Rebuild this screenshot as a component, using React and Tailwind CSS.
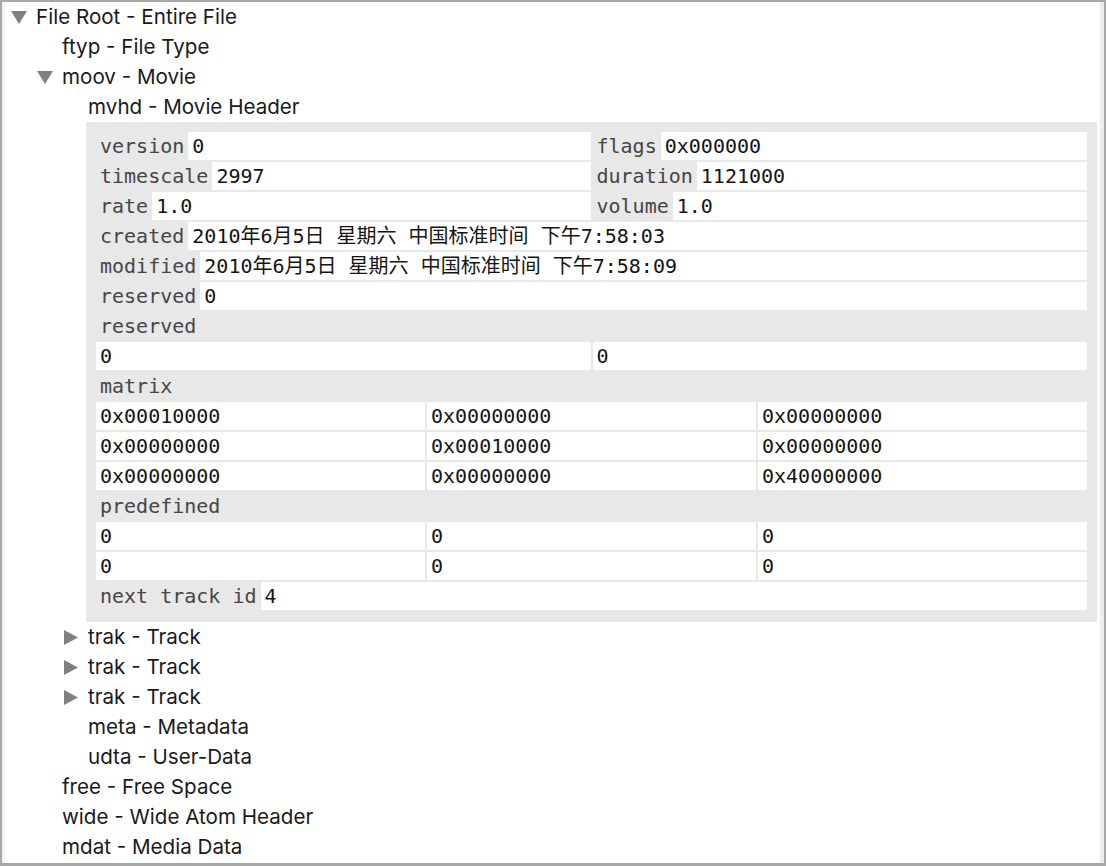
import React from "react";

const SANS = { fontFamily: "Inter, 'Liberation Sans', sans-serif" };
const MONO = {
  fontFamily: "'DejaVu Sans Mono', 'Noto Sans CJK SC', monospace",
};

function DownTri() {
  return (
    <svg width="16" height="13" viewBox="0 0 16 13" className="ml-[1px]">
      <polygon points="0,0 16,0 8,13" fill="#808080" />
    </svg>
  );
}

function RightTri() {
  return (
    <svg width="14" height="15" viewBox="0 0 14 15" className="ml-[2px]">
      <polygon points="0,0 14,7.5 0,15" fill="#808080" />
    </svg>
  );
}

function TreeRow({ level, label, toggle }) {
  return (
    <div
      className="flex h-[30px] items-center text-[20.6px] text-[#1a1a1a]"
      style={{ paddingLeft: 5 + level * 26 }}
    >
      <div className="flex w-[26px] items-center">
        {toggle === "open" && <DownTri />}
        {toggle === "closed" && <RightTri />}
      </div>
      <span className="whitespace-nowrap">{label}</span>
    </div>
  );
}

// Label sits on the panel grey, value gets a white cell filling the rest.
function Field({ name, value }) {
  return (
    <div className="flex h-[28px] items-center">
      <span className="whitespace-pre px-[4px] text-[#454545]">{name}</span>
      <span className="flex h-full flex-1 items-center whitespace-pre bg-white px-[4px] text-[#141414]">
        {value}
      </span>
    </div>
  );
}

function Header({ name }) {
  return (
    <div className="flex h-[28px] items-center px-[4px] text-[#454545]">{name}</div>
  );
}

function Cell({ value }) {
  return (
    <div className="flex h-[28px] items-center bg-white px-[4px] text-[#141414]">
      {value}
    </div>
  );
}

const matrix = [
  ["0x00010000", "0x00000000", "0x00000000"],
  ["0x00000000", "0x00010000", "0x00000000"],
  ["0x00000000", "0x00000000", "0x40000000"],
];

function MovieHeaderPanel() {
  return (
    <div
      className="ml-[81px] mr-[3px] flex flex-col gap-[2px] bg-[#e8e8e8] px-[10px] pb-[12px] pt-[10px] text-[20px] leading-[28px]"
      style={MONO}
    >
      <div className="grid grid-cols-2 gap-[2px]">
        <Field name="version" value="0" />
        <Field name="flags" value="0x000000" />
      </div>
      <div className="grid grid-cols-2 gap-[2px]">
        <Field name="timescale" value="2997" />
        <Field name="duration" value="1121000" />
      </div>
      <div className="grid grid-cols-2 gap-[2px]">
        <Field name="rate" value="1.0" />
        <Field name="volume" value="1.0" />
      </div>
      <Field name="created" value="2010年6月5日 星期六 中国标准时间 下午7:58:03" />
      <Field name="modified" value="2010年6月5日 星期六 中国标准时间 下午7:58:09" />
      <Field name="reserved" value="0" />
      <Header name="reserved" />
      <div className="grid grid-cols-2 gap-[2px]">
        <Cell value="0" />
        <Cell value="0" />
      </div>
      <Header name="matrix" />
      {matrix.map((row, i) => (
        <div key={i} className="grid grid-cols-3 gap-[2px]">
          {row.map((v, j) => (
            <Cell key={j} value={v} />
          ))}
        </div>
      ))}
      <Header name="predefined" />
      {[0, 1].map((i) => (
        <div key={i} className="grid grid-cols-3 gap-[2px]">
          <Cell value="0" />
          <Cell value="0" />
          <Cell value="0" />
        </div>
      ))}
      <Field name="next track id" value="4" />
    </div>
  );
}

export default function App() {
  return (
    <div
      className="flex h-[866px] w-[1106px] overflow-hidden border-b-[3px] border-l-2 border-r-2 border-t-2 border-[#a8a8a8] bg-white"
      style={SANS}
    >
      <div className="w-[3px] bg-[#f3f3f3]" />
      <div className="flex flex-1 flex-col">
        <TreeRow level={0} toggle="open" label="File Root - Entire File" />
        <TreeRow level={1} label="ftyp - File Type" />
        <TreeRow level={1} toggle="open" label="moov - Movie" />
        <TreeRow level={2} label="mvhd - Movie Header" />
        <MovieHeaderPanel />
        <TreeRow level={2} toggle="closed" label="trak - Track" />
        <TreeRow level={2} toggle="closed" label="trak - Track" />
        <TreeRow level={2} toggle="closed" label="trak - Track" />
        <TreeRow level={2} label="meta - Metadata" />
        <TreeRow level={2} label="udta - User-Data" />
        <TreeRow level={1} label="free - Free Space" />
        <TreeRow level={1} label="wide - Wide Atom Header" />
        <TreeRow level={1} label="mdat - Media Data" />
      </div>
      <div className="w-[4px] bg-[#ececec]" />
    </div>
  );
}
